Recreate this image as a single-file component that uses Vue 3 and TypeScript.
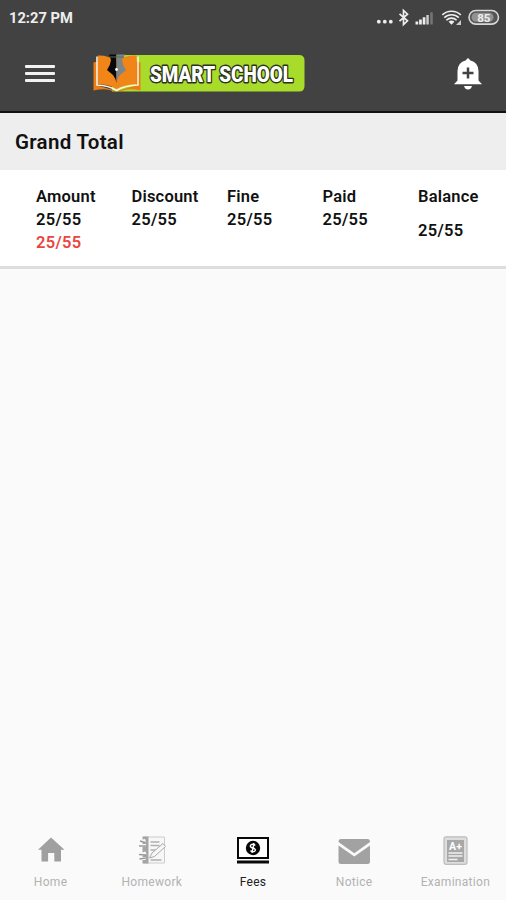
<script setup lang="ts">
interface Total { label: string; value: string; extra?: string; offset?: boolean }
interface Tab { label: string; icon: string; active?: boolean }

const totals: Total[] = [
  { label: 'Amount', value: '25/55', extra: '25/55' },
  { label: 'Discount', value: '25/55' },
  { label: 'Fine', value: '25/55' },
  { label: 'Paid', value: '25/55' },
  { label: 'Balance', value: '25/55', offset: true },
]

const tabs: Tab[] = [
  { label: 'Home', icon: 'home' },
  { label: 'Homework', icon: 'homework' },
  { label: 'Fees', icon: 'fees', active: true },
  { label: 'Notice', icon: 'notice' },
  { label: 'Examination', icon: 'exam' },
]
</script>

<template>
  <div class="screen">
    <header class="top">
      <div class="status">
        <span class="time">12:27 PM</span>
        <svg class="indicators" width="126" height="22" viewBox="0 0 126 22">
          <g fill="#eee">
            <circle cx="2.8" cy="14.7" r="1.9" /><circle cx="8.8" cy="14.7" r="1.9" /><circle cx="14.8" cy="14.7" r="1.9" />
            <path d="M39.500 14.500h2.700V17.500h-2.700zM43.100 12.500h2.700v5h-2.700zM46.700 10.300h2.700v7.200h-2.700z" />
            <path d="M50.300 8h2.500v9.500h-2.500z" fill="#ccc" />
            <path d="M54.200 5.300h2.600v12.200h-2.600z" fill="#747474" />
            <path d="M72.600 14.700a4 4 0 0 1 5.800 0l-2.900 3z" />
            <path d="M85 13v5h-5z" fill="#ccc" />
          </g>
          <path d="M23.500 6.800l8 7-4 3.700V3.500l4 3.700-8 7" fill="none" stroke="#eee" stroke-width="1.700" />
          <path d="M66.300 7.900a13.500 13.500 0 0 1 18.500 0M68.300 10.700a10.500 10.500 0 0 1 14.500 0M70.400 13.300a7 7 0 0 1 10.200 0" fill="none" stroke="#eee" stroke-width="1.600" />
          <rect x="93" y="3.500" width="29.500" height="13.600" rx="6.800" fill="#555" stroke="#d8d8d8" stroke-width="1.600" />
          <rect x="95.500" y="5.800" width="22" height="9" rx="4.500" fill="#929292" />
          <text x="107.800" y="14.600" text-anchor="middle" class="battery">85</text>
        </svg>
      </div>
      <div class="toolbar">
        <button class="menu" aria-label="Menu"><i></i><i></i><i></i></button>
        <svg class="logo" width="214" height="42" viewBox="92 52 214 42">
          <path d="M112 55h187q5.500 0 5.500 5.500v25.500q0 5.500-5.500 5.500H112z" fill="#a9db2b" />
          <path d="M93.500 62.500l4-1v24l19 5.500 19.500-5.500v-24l4.500 1V90.500q-13-2.500-19 .5h-9q-6-3-19-.5z" fill="#ed7d13" />
          <path d="M97 56.500v28.500q12 .5 19.500 5.500 8-5 21.500-5.500V56.500" fill="none" stroke="#fff3df" stroke-width="1.600" />
          <path d="M98 55.500q10-.5 18.500 5.500 8.500-6 20-5.500v28.500q-13 .5-20 5-7-4.500-18.500-5z" fill="#f28517" />
          <path d="M109 54.500h7.500V83q-1-5-3.500-8l-6-5q3.500-5 4-10z" fill="#080808" />
          <path d="M116.500 54.500H125l-3 5.500q.5 5.500 4 10l-6 5q-2.500 3-3.500 8z" fill="#7c868a" />
          <path d="M110 57h14" stroke="#5a6b50" stroke-width="1" />
          <circle cx="116.500" cy="69.500" r="1.400" fill="#fff" />
          <text x="150" y="82" textLength="143" lengthAdjust="spacingAndGlyphs" class="wordmark">SMART SCHOOL</text>
        </svg>
        <svg class="bell" width="30" height="34" viewBox="0 0 30 34">
          <path d="M13 3.200Q15-.8 17 3.200 25.500 5.500 25.500 14v9.500l3.500 3.800H1l3.500-3.800V14q0-8.500 8.500-10.800z" fill="#fff" />
          <path d="M11 29h8q-1 3.500-4 3.500T11 29z" fill="#fff" />
          <path d="M15 10.500v11M9.500 16h11" stroke="#424242" stroke-width="2.500" />
        </svg>
      </div>
    </header>

    <section class="summary">
      <h1>Grand Total</h1>
      <div class="totals">
        <div v-for="t in totals" :key="t.label" class="cell">
          <span>{{ t.label }}</span>
          <span :class="{ lowered: t.offset }">{{ t.value }}</span>
          <span v-if="t.extra" class="due">{{ t.extra }}</span>
        </div>
      </div>
    </section>

    <main class="blank"></main>

    <nav class="tabs">
      <a v-for="t in tabs" :key="t.label" class="tab" :class="[t.icon, { active: t.active }]">
        <svg width="34" height="32" viewBox="0 0 34 32">
          <path v-if="t.icon === 'home'" d="M17 3.500L30.500 15.800H27V27.500h-6.700V19h-6.200v8.500H7.500V15.800H4z" fill="#a0a0a0" />
          <g v-else-if="t.icon === 'homework'">
            <path d="M8.500 3h21v26h-21z" fill="#f7f7f7" stroke="#ccc" />
            <path d="M7.500 2.500h6v27h-6z" fill="#a5a5a5" />
            <path d="M4.500 7.500l6-1M4 11.500h7M4 21l7-2M4.500 24.500h6" stroke="#fafafa" stroke-width="3" />
            <path d="M5 7l5 1.500M4 12h7M4 20.500l7 .5M4.500 25l6-1" stroke="#999" stroke-width="1.700" />
            <path d="M15.500 8h9M15.500 11.500h9M15.500 16h7M15.500 26h11" stroke="#b0b0b0" stroke-width="1.300" />
            <path d="M14.500 24l2.500-5L28 9.500l2.500 3L19.500 22.500z" fill="#f7f7f7" stroke="#aaa" />
          </g>
          <g v-else-if="t.icon === 'fees'">
            <path d="M2 4h30v20H2z" fill="#fff" stroke="#080808" stroke-width="2" />
            <path d="M1 26.500h32v3H1z" fill="#080808" />
            <circle cx="17" cy="14" r="7.200" fill="#080808" />
            <path d="M19.300 11.500q-2-2-4.200-.8-1.600 1.500.2 2.800l3 1q2 1.300.2 2.800-2 1-4-.7M18 9.200l-2 9.600" fill="none" stroke="#fff" stroke-width="1.400" />
          </g>
          <g v-else-if="t.icon === 'notice'" fill="#a2a2a2">
            <path d="M4 5h26.500Q33 5 33 8L17.300 19.300 1.500 8Q1.500 5 4 5z" />
            <path d="M1.500 11.500l15.800 11L33 11.500V27.500q0 2.500-2.500 2.500H4q-2.500 0-2.500-2.500z" />
          </g>
          <g v-else>
            <rect x="6" y="2.800" width="23" height="27.500" rx="2" fill="#ddd" stroke="#bdbdbd" stroke-width="1.200" />
            <path d="M9 6h17v22H9z" fill="#a8a8a8" />
            <text x="17.500" y="16" text-anchor="middle" class="grade">A+</text>
            <path d="M10.500 19h14M10.500 22h14M10.500 25.500h9" stroke="#f0f0f0" stroke-width="1.500" />
          </g>
        </svg>
        <span>{{ t.label }}</span>
      </a>
    </nav>
  </div>
</template>

<style>
body { margin: 0; background: #fafafa; }
</style>

<style scoped>
.screen { width: 506px; height: 900px; display: flex; flex-direction: column; background: #fafafa; font-family: Roboto, sans-serif; color: #111; }
.top { box-sizing: border-box; height: 113px; background: #424242; border-bottom: 2px solid #111; }
.status { height: 36px; display: flex; justify-content: space-between; padding: 0 4px 0 9px; }
.time { font-size: 14.700px; line-height: 37px; font-weight: 700; color: #eee; }
.indicators { margin-top: 7px; }
.battery { font: 700 11.500px Roboto, sans-serif; fill: #eee; }
.toolbar { height: 75px; display: flex; align-items: center; padding: 0 23px 0 25px; }
.menu { width: 30px; padding: 0; border: 0; background: none; display: flex; flex-direction: column; gap: 4px; }
.menu i { height: 3px; border-radius: 1px; background: #f2f2f2; }
.logo { margin-left: 37px; margin-bottom: 1px; overflow: visible; }
.wordmark { font: 900 22px Roboto, sans-serif; fill: #fff; stroke: #29331b; stroke-width: 2.800px; paint-order: stroke; stroke-linejoin: round; }
.bell { margin-left: auto; }
.summary { background: #fff; border-bottom: 3px solid #ddd; }
h1 { margin: 0; padding-left: 15px; height: 57px; line-height: 59px; background: #eee; font-size: 20.500px; font-weight: 600; letter-spacing: .3px; }
.totals { box-sizing: border-box; height: 96px; padding: 15px 0 0 36px; display: grid; grid-template-columns: repeat(5, 95.500px); }
.cell { display: flex; flex-direction: column; font-size: 16.500px; line-height: 23px; font-weight: 600; letter-spacing: .2px; }
.cell span + span { letter-spacing: .3px; }
.lowered { margin-top: 11px; }
.due { color: #e9463f; }
.blank { flex: 1; }
.tabs { height: 76px; display: grid; grid-template-columns: repeat(5, 1fr); }
.tab { display: flex; flex-direction: column; align-items: center; padding-top: 10px; font-size: 12px; color: #b2b2b2; }
.tab span { line-height: 14px; margin-top: 9px; letter-spacing: .3px; }
.tab.active { color: #222; }
.grade { font: 700 10.500px Roboto, sans-serif; fill: #fff; }
</style>
